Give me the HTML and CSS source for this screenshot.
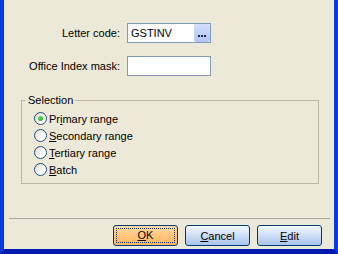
FILE: index.html
```html
<!DOCTYPE html>
<html>
<head>
  <meta charset="UTF-8">
  <title>Letter code</title>
  <link rel="stylesheet" href="styles.css">
</head>
<body>
  <div class="window">
    <div class="fields">
      <label class="label">Letter code:</label>
      <div class="input">
        <span>GSTINV</span>
        <span class="browse">
          <svg width="16" height="18" viewBox="0 0 16 18">
            <rect x="4" y="11" width="2" height="2" fill="#1a2450"/>
            <rect x="7" y="11" width="2" height="2" fill="#1a2450"/>
            <rect x="10" y="11" width="2" height="2" fill="#1a2450"/>
          </svg>
        </span>
      </div>
      <label class="label">Office Index mask:</label>
      <div class="input"></div>
    </div>

    <fieldset class="group">
      <legend>Selection</legend>
      <div class="radio checked"><span class="circle"></span><span>Pr<u>i</u>mary range</span></div>
      <div class="radio"><span class="circle"></span><span><u>S</u>econdary range</span></div>
      <div class="radio"><span class="circle"></span><span><u>T</u>ertiary range</span></div>
      <div class="radio"><span class="circle"></span><span><u>B</u>atch</span></div>
    </fieldset>

    <div class="sep"></div>

    <div class="buttons">
      <button class="btn default"><span class="focus"><u>O</u>K</span></button>
      <button class="btn"><u>C</u>ancel</button>
      <button class="btn"><u>E</u>dit</button>
    </div>
  </div>
</body>
</html>
```

FILE: styles.css
```css
body {
  margin: 0;
  background: #0831d9;
  font-family: "Liberation Sans", Arial, sans-serif;
  font-size: 11px;
  color: #000;
}

.window {
  width: 338px;
  height: 254px;
  box-sizing: border-box;
  background: #ece9d8;
  border-left: 4px solid #0a3be0;
  border-right: 4px solid #0a3be0;
  border-bottom: 5px solid #0019b0;
  display: flex;
  flex-direction: column;
}

.fields {
  margin-top: 23px;
  display: grid;
  grid-template-columns: 116px 84px;
  column-gap: 7px;
  row-gap: 13px;
  align-items: center;
}

.label {
  text-align: right;
}

.input {
  height: 20px;
  box-sizing: border-box;
  border: 1px solid #7f9db9;
  background: #fff;
  display: flex;
  align-items: center;
  padding-left: 3px;
}

.browse {
  margin-left: auto;
  width: 16px;
  height: 18px;
  border-radius: 2px;
  background: linear-gradient(#d2defc, #b2c6f5);
}

.browse svg {
  display: block;
}

.group {
  margin: 18px 15px 0 17px;
  padding: 3px 0 5px 4px;
  border: 1px solid #bcb8a6;
}

.group legend {
  padding: 0 2px;
  line-height: 13px;
}

.radio {
  height: 17px;
  margin-left: 8px;
  display: flex;
  align-items: center;
  gap: 2px;
}

.circle {
  width: 13px;
  height: 13px;
  box-sizing: border-box;
  border: 1px solid #1c5180;
  border-radius: 50%;
  background: linear-gradient(135deg, #dcd9cd, #fff 70%);
  display: flex;
  align-items: center;
  justify-content: center;
}

.checked .circle::after {
  content: "";
  width: 5px;
  height: 5px;
  border-radius: 50%;
  background: radial-gradient(circle at 35% 35%, #5de05d, #21a121);
}

.sep {
  margin: 34px 4px 0 5px;
  height: 1px;
  background: #aca899;
}

.buttons {
  margin-top: 6px;
  padding-right: 12px;
  display: flex;
  justify-content: flex-end;
  gap: 7px;
}

.btn {
  width: 65px;
  height: 21px;
  padding: 0;
  border: 1px solid #003c74;
  border-radius: 3px;
  background: linear-gradient(#f4f8ff, #d5e3f8 40%, #a9c4ec);
  font-family: inherit;
  font-size: 11px;
  color: #000;
}

.btn.default {
  background: linear-gradient(#ffdcaa, #ffc57a 50%, #ffb860);
  padding: 2px;
}

.focus {
  display: block;
  height: 100%;
  box-sizing: border-box;
  border: 1px dotted #1c2c70;
  line-height: 13px;
}
```
